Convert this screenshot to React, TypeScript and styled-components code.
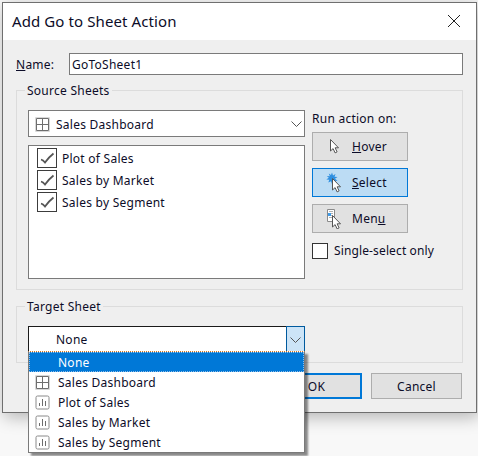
import styled, { createGlobalStyle } from "styled-components";

const Global = createGlobalStyle`
  html, body {
    margin: 0;
    background: #f8f8f8;
  }
  #root {
    width: 478px;
    height: 456px;
    overflow: hidden;
    padding: 2px 0 0 2px;
    box-sizing: border-box;
    font-family: "Noto Sans", "Open Sans", sans-serif;
    font-size: 12px;
    letter-spacing: 0.25px;
    color: #0c0c28;
  }
`;

const Dialog = styled.div`
  position: relative;
  width: 475px;
  height: 411px;
  box-sizing: border-box;
  border: 1px solid #6f6f6f;
  background: #efefef;
  box-shadow: 2px 4px 16px rgba(0, 0, 0, 0.28);
`;

const TitleBar = styled.div`
  height: 37px;
  background: #fff;
  display: flex;
  align-items: center;
  justify-content: space-between;
  padding: 0 15px 2px 9px;
  box-sizing: border-box;
  font-size: 15px;
  letter-spacing: 0.1px;
`;

const Body = styled.div`
  padding: 13px 13px 0 13px;
  display: flex;
  flex-direction: column;
`;

const NameRow = styled.div`
  display: flex;
  align-items: center;
`;

const NameLabel = styled.label`
  width: 53px;
`;

const Field = styled.div`
  width: 394px;
  height: 22px;
  box-sizing: border-box;
  border: 1px solid #7a7a7a;
  background: #fff;
  display: flex;
  align-items: center;
  padding-left: 2px;
`;

const Group = styled.fieldset<{ $h: number; $mt: number }>`
  margin: ${(p) => p.$mt}px 0 0 0;
  padding: 0;
  width: 447px;
  height: ${(p) => p.$h}px;
  box-sizing: border-box;
  border: 1px solid #dcdcdc;
  position: relative;
`;

const Legend = styled.div`
  position: absolute;
  top: -8px;
  left: 8px;
  padding: 0 2px;
  background: #efefef;
  line-height: 16px;
`;

const GroupRow = styled.div`
  display: flex;
  padding: 19px 0 0 11px;
  gap: 7px;
`;

const LeftCol = styled.div`
  display: flex;
  flex-direction: column;
  gap: 8px;
`;

const Combo = styled.div<{ $focus?: boolean }>`
  width: 277px;
  height: 27px;
  box-sizing: border-box;
  border: 1px solid ${(p) => (p.$focus ? "#1a1a1a" : "#7a7a7a")};
  background: #fff;
  display: flex;
  align-items: center;
  padding-top: ${(p) => (p.$focus ? "0" : "1px")};
`;

const ComboIcon = styled.span`
  display: inline-flex;
  margin-left: 6px;
  margin-right: 6px;
`;

const ComboText = styled.span<{ $indent?: boolean }>`
  margin-left: ${(p) => (p.$indent ? "27px" : "0")};
  flex: 1;
`;

const Caret = styled.div<{ $open?: boolean }>`
  width: 17px;
  align-self: stretch;
  display: flex;
  align-items: center;
  justify-content: center;
  margin: ${(p) => (p.$open ? "-1px" : "-2px -1px -1px 0")};
  border: ${(p) => (p.$open ? "1px solid #005a9e" : "none")};
  background: ${(p) => (p.$open ? "#cce4f7" : "transparent")};
`;

const ListBox = styled.div`
  width: 277px;
  height: 134px;
  box-sizing: border-box;
  border: 1px solid #7a7a7a;
  background: #fff;
  padding: 2px 8px;
  display: flex;
  flex-direction: column;
  gap: 2px;
`;

const CheckRow = styled.div`
  display: flex;
  align-items: center;
  height: 20px;
  gap: 5px;
`;

const CheckBox = styled.div`
  width: 20px;
  height: 20px;
  box-sizing: border-box;
  border: 1px solid #3c3c3c;
  background: #fff;
  display: flex;
`;

const RightCol = styled.div`
  display: flex;
  flex-direction: column;
  width: 96px;
`;

const RunLabel = styled.div`
  line-height: 16px;
  margin: 1px 0 5px;
  white-space: nowrap;
`;

const ModeButton = styled.div<{ $active?: boolean }>`
  width: 96px;
  height: 29px;
  box-sizing: border-box;
  margin-bottom: 7px;
  border: 1px solid ${(p) => (p.$active ? "#0078d7" : "#adadad")};
  background: ${(p) => (p.$active ? "#bcdcf4" : "#e1e1e1")};
  display: flex;
  align-items: center;
  padding-left: 13px;
  gap: 6px;
`;

const Key = styled.span`
  text-decoration: underline;
`;

const SingleRow = styled.div`
  display: flex;
  align-items: center;
  gap: 6px;
  margin-top: 2px;
  white-space: nowrap;
  letter-spacing: 0.13px;
`;

const EmptyBox = styled.div`
  width: 16px;
  height: 16px;
  flex-shrink: 0;
  box-sizing: border-box;
  border: 1px solid #333;
  background: #fff;
`;

const TargetInner = styled.div`
  padding: 19px 0 0 11px;
`;

const Footer = styled.div`
  display: flex;
  justify-content: flex-end;
  gap: 9px;
  margin-top: 10px;
  width: 446px;
`;

const DialogButton = styled.div<{ $primary?: boolean }>`
  width: 91px;
  height: 26px;
  box-sizing: border-box;
  border: ${(p) => (p.$primary ? "2px solid #0078d7" : "1px solid #adadad")};
  background: #e1e1e1;
  display: flex;
  align-items: center;
  justify-content: center;
`;

const Dropdown = styled.div`
  position: absolute;
  left: 25px;
  top: 348px;
  width: 277px;
  height: 102px;
  box-sizing: border-box;
  border: 1px solid #7a7a7a;
  border-top: 1px dotted #e07b20;
  background: #fff;
  box-shadow: 3px 3px 2px rgba(0, 0, 0, 0.45);
`;

const Option = styled.div<{ $selected?: boolean }>`
  height: 20px;
  display: flex;
  align-items: center;
  gap: 8px;
  padding-left: 6px;
  color: ${(p) => (p.$selected ? "#fff" : "inherit")};
  background: ${(p) => (p.$selected ? "#0078d7" : "transparent")};
  outline: ${(p) => (p.$selected ? "1px dotted #8fbde6" : "none")};
  outline-offset: -1px;
`;

const IconSlot = styled.span`
  width: 15px;
  height: 15px;
  display: inline-flex;
`;

const Chevron = () => (
  <svg width="11" height="6" viewBox="0 0 11 6" fill="none">
    <path d="M.5.5l5 5 5-5" stroke="#555" />
  </svg>
);

const Tick = () => (
  <svg width="18" height="18" viewBox="0 0 18 18" fill="none">
    <path d="M3 10.5Q5 11 7 13.5Q11 8 15.5 4.5" stroke="#555" strokeWidth="1.8" />
  </svg>
);

const DashIcon = () => (
  <svg width="15" height="15" viewBox="0 0 15 15" fill="none">
    <path d="M1.5 1.5h12v12h-12zM7.5 1.5v12M1.5 7.5h12" stroke="#6e6e6e" />
    <path d="M.5.5h14v14H.5z" stroke="#d8d8d8" />
  </svg>
);

const ChartIcon = () => (
  <svg width="15" height="15" viewBox="0 0 15 15" fill="none">
    <rect x="1" y="1" width="13" height="13" rx="1.5" stroke="#8a8a8a" />
    <path d="M4.5 11V8M7.5 11V4M10.5 11V6" stroke="#6e6e6e" />
  </svg>
);

const Cursor = ({ x, y }: { x: number; y: number }) => (
  <path
    transform={`translate(${x} ${y})`}
    d="M.5.5v11.5l2.6-2.4 2 4.3 2-1-2-4.1h3.4z"
    fill="#fff"
    stroke="#555"
  />
);

const HoverIcon = () => (
  <svg width="20" height="21" viewBox="0 0 20 21">
    <Cursor x={4} y={3} />
  </svg>
);

const SelectIcon = () => (
  <svg width="20" height="21" viewBox="0 0 20 21">
    <path
      d="M6 .5l1 3 2.500-1.500-1 2.800 3 .2-2.500 1.800 2.500 2-3 .2 1 2.800-2.700-1.600L6 12l-1-2.800-2.700 1.300 1-2.700-3-.3 2.500-1.700L.8 4.100l3 .1-1-2.700L5 3z"
      fill="#2f8fe0"
    />
    <Cursor x={6} y={6} />
  </svg>
);

const MenuIcon = () => (
  <svg width="20" height="21" viewBox="0 0 20 21">
    <path d="M1.500 1.500h7v12h-7z" fill="#fff" stroke="#8a8a8a" />
    <path d="M2 5h3v3H2z" fill="#3f9be8" />
    <path d="M3 3.500h4M5 5.500h2M5 7.500h2M3 9.500h4" stroke="#b0b0b0" />
    <Cursor x={6} y={7} />
  </svg>
);

const SHEETS = ["Plot of Sales", "Sales by Market", "Sales by Segment"];

const App = () => (
  <>
    <Global />
    <Dialog>
      <TitleBar>
        <span>Add Go to Sheet Action</span>
        <svg width="14" height="14" viewBox="0 0 14 14" fill="none">
          <path d="M1 1l12 12M13 1L1 13" stroke="#222" />
        </svg>
      </TitleBar>
      <Body>
        <NameRow>
          <NameLabel>
            <Key>N</Key>ame:
          </NameLabel>
          <Field>GoToSheet1</Field>
        </NameRow>
        <Group $h={200} $mt={15}>
          <Legend>Source Sheets</Legend>
          <GroupRow>
            <LeftCol>
              <Combo>
                <ComboIcon>
                  <DashIcon />
                </ComboIcon>
                <ComboText>Sales Dashboard</ComboText>
                <Caret>
                  <Chevron />
                </Caret>
              </Combo>
              <ListBox>
                {SHEETS.map((s) => (
                  <CheckRow key={s}>
                    <CheckBox>
                      <Tick />
                    </CheckBox>
                    <span>{s}</span>
                  </CheckRow>
                ))}
              </ListBox>
            </LeftCol>
            <RightCol>
              <RunLabel>Run action on:</RunLabel>
              <ModeButton>
                <HoverIcon />
                <span>
                  <Key>H</Key>over
                </span>
              </ModeButton>
              <ModeButton $active>
                <SelectIcon />
                <span>
                  <Key>S</Key>elect
                </span>
              </ModeButton>
              <ModeButton>
                <MenuIcon />
                <span>
                  Men<Key>u</Key>
                </span>
              </ModeButton>
              <SingleRow>
                <EmptyBox />
                Single-select only
              </SingleRow>
            </RightCol>
          </GroupRow>
        </Group>
        <Group $h={57} $mt={16}>
          <Legend>Target Sheet</Legend>
          <TargetInner>
            <Combo $focus>
              <ComboText $indent>None</ComboText>
              <Caret $open>
                <Chevron />
              </Caret>
            </Combo>
          </TargetInner>
        </Group>
        <Footer>
          <DialogButton $primary>OK</DialogButton>
          <DialogButton>Cancel</DialogButton>
        </Footer>
      </Body>
      <Dropdown>
        <Option $selected>
          <IconSlot />
          None
        </Option>
        <Option>
          <IconSlot>
            <DashIcon />
          </IconSlot>
          Sales Dashboard
        </Option>
        {SHEETS.map((s) => (
          <Option key={s}>
            <IconSlot>
              <ChartIcon />
            </IconSlot>
            {s}
          </Option>
        ))}
      </Dropdown>
    </Dialog>
  </>
);

export default App;
